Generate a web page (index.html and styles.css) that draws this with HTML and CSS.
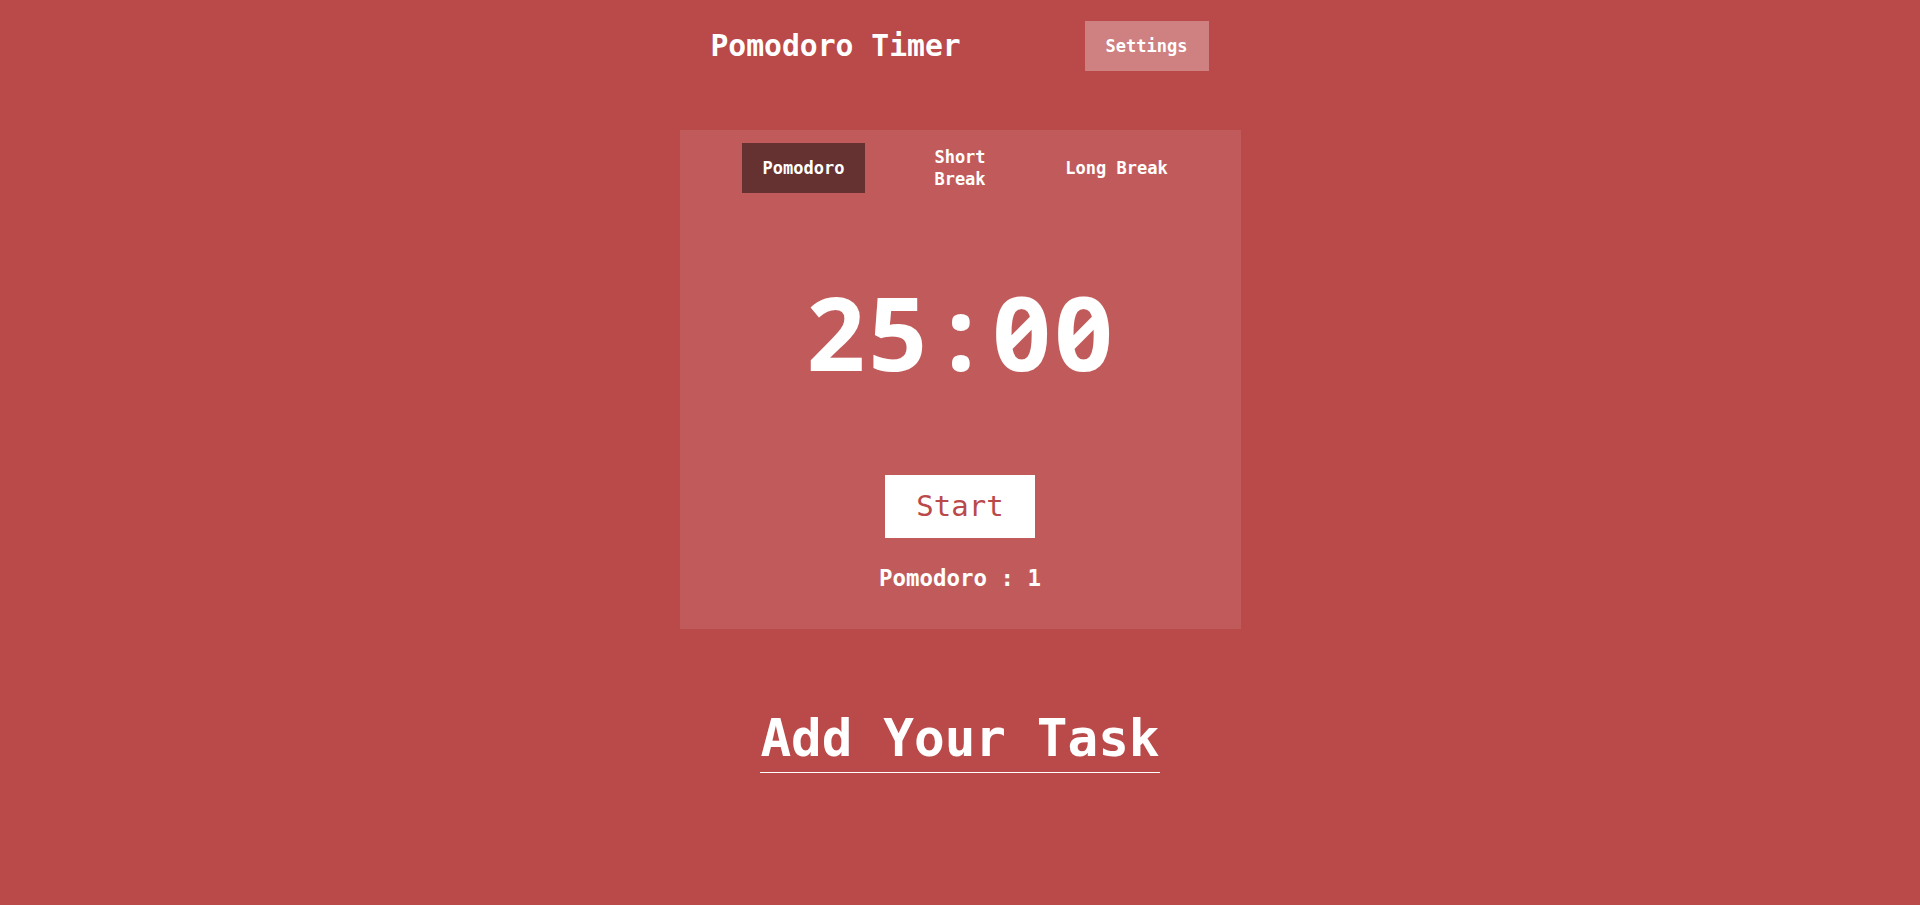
FILE: index.html
```html
<!DOCTYPE html>
<html lang="en">
<head>
<meta charset="utf-8">
<title>Pomodoro Timer</title>
<link rel="stylesheet" href="styles.css">
</head>
<body>
<header class="topbar">
  <h1 class="title">Pomodoro Timer</h1>
  <button class="settings-btn">Settings</button>
</header>
<main class="timer-card">
  <div class="tabs">
    <button class="tab active">Pomodoro</button>
    <button class="tab">Short Break</button>
    <button class="tab">Long Break</button>
  </div>
  <div class="time">25<span class="time-sep">:</span>00</div>
  <button class="start-btn">Start</button>
  <p class="count">Pomodoro : 1</p>
</main>
<section class="tasks">
  <h2 class="tasks-title">Add Your Task</h2>
</section>
</body>
</html>
```

FILE: styles.css
```css
* { box-sizing: border-box; }
html, body {
  margin: 0;
  padding: 0;
}
body {
  background: #ba4949;
  color: #ffffff;
  font-family: "DejaVu Sans Mono", "Liberation Mono", monospace;
  min-height: 905px;
}
button {
  font-family: inherit;
  border: none;
  cursor: pointer;
}
.topbar {
  width: 561px;
  margin: 0 auto;
  padding: 21px 32px 0 31px;
  display: flex;
  align-items: center;
  justify-content: space-between;
}
.title {
  margin: 0;
  font-size: 29.7px;
  font-weight: bold;
  line-height: 34px;
}
.settings-btn {
  height: 50px;
  padding: 0 21px;
  background: rgba(255, 255, 255, 0.3);
  color: #ffffff;
  font-size: 17px;
  font-weight: bold;
}
.timer-card {
  width: 561px;
  margin: 59px auto 0;
  padding: 13px 0 38px;
  background: rgba(255, 255, 255, 0.1);
  display: flex;
  flex-direction: column;
  align-items: center;
}
.tabs {
  display: grid;
  grid-template-columns: repeat(3, 150px);
  column-gap: 6.5px;
  justify-items: center;
}
.tab {
  height: 50px;
  padding: 0 21px;
  background: transparent;
  color: #ffffff;
  font-size: 17px;
  font-weight: bold;
  line-height: 22px;
  display: flex;
  align-items: center;
  justify-content: center;
  text-align: center;
}
.tab.active {
  background: #663131;
}
.time {
  margin-top: 89px;
  padding-left: 3px;
  font-family: "Noto Sans", "Open Sans", sans-serif;
  font-feature-settings: "zero" 1, "tnum" 1;
  font-size: 102px;
  font-weight: bold;
  line-height: 100px;
  letter-spacing: 3.5px;
}
.time-sep {
  margin: 0 14px 0 16px;
}
.start-btn {
  margin-top: 93px;
  height: 63px;
  padding: 0 31px;
  background: #ffffff;
  color: #ba4949;
  font-size: 29px;
  line-height: 33px;
}
.count {
  margin: 27px 0 0;
  font-size: 22.4px;
  font-weight: bold;
  line-height: 26px;
}
.tasks {
  margin-top: 84px;
  text-align: center;
}
.tasks-title {
  display: inline-block;
  margin: 0;
  padding-bottom: 8px;
  font-size: 51px;
  line-height: 51px;
  font-weight: bold;
  border-bottom: 1px solid #ffffff;
}
```
